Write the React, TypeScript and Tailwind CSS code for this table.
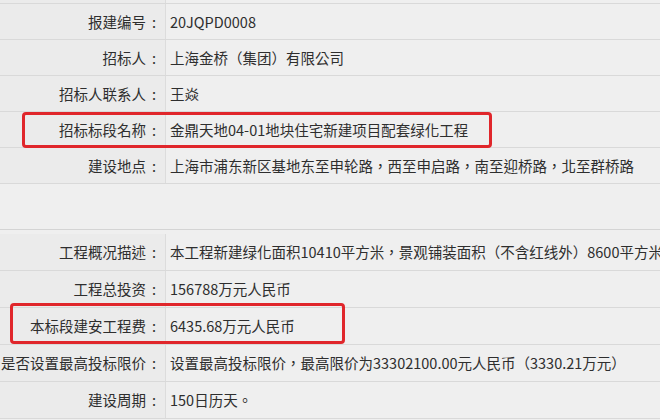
import React from "react";

const table1 = [
  ["报建编号", "20JQPD0008"],
  ["招标人", "上海金桥（集团）有限公司"],
  ["招标人联系人", "王焱"],
  ["招标标段名称", "金鼎天地04-01地块住宅新建项目配套绿化工程"],
  ["建设地点", "上海市浦东新区基地东至申轮路，西至申启路，南至迎桥路，北至群桥路"],
];

const table2 = [
  ["工程概况描述", "本工程新建绿化面积10410平方米，景观铺装面积（不含红线外）8600平方米"],
  ["工程总投资", "156788万元人民币"],
  ["本标段建安工程费", "6435.68万元人民币"],
  ["是否设置最高投标限价", "设置最高投标限价，最高限价为33302100.00元人民币（3330.21万元）"],
  ["建设周期", "150日历天。"],
];

function Row({ label, value, h }: { label: string; value: string; h: string }) {
  return (
    <div className={`flex ${h} border-b border-[#d9d9d9]`}>
      <div className="w-[166px] shrink-0 flex items-center justify-end pr-[3px] bg-[#ebebeb] border-r border-[#dcdcdc] whitespace-nowrap">
        <span>{label}</span>
        <span className="w-[16px] text-center">:</span>
      </div>
      <div className="flex-1 flex items-center pl-[4px] whitespace-nowrap overflow-hidden">{value}</div>
    </div>
  );
}

export default function App() {
  return (
    <div
      className="relative w-[660px] h-[420px] overflow-hidden bg-[#efefef] text-[#2e2e2e] text-[14.5px]"
      style={{ fontFamily: '"Noto Sans CJK TC", "Noto Sans CJK SC", sans-serif' }}
    >
      <div className="h-[4px] border-b border-[#d9d9d9] flex">
        <div className="w-[166px] bg-[#ebebeb] border-r border-[#dcdcdc]" />
      </div>
      {table1.map(([l, v]) => (
        <Row key={l} label={l} value={v} h="h-[36px]" />
      ))}
      <div className="h-[46px] border-b border-[#d4d4d4]" />
      <div className="h-[4px]" />
      {table2.map(([l, v]) => (
        <Row key={l} label={l} value={v} h="h-[37px]" />
      ))}

      <div className="absolute left-[22px] top-[112px] w-[470px] h-[36px] border-[3px] border-[#e0262b] rounded-[4px]" />
      <div className="absolute left-[10px] top-[303px] w-[335px] h-[41px] border-[3px] border-[#e0262b] rounded-[4px]" />
    </div>
  );
}
